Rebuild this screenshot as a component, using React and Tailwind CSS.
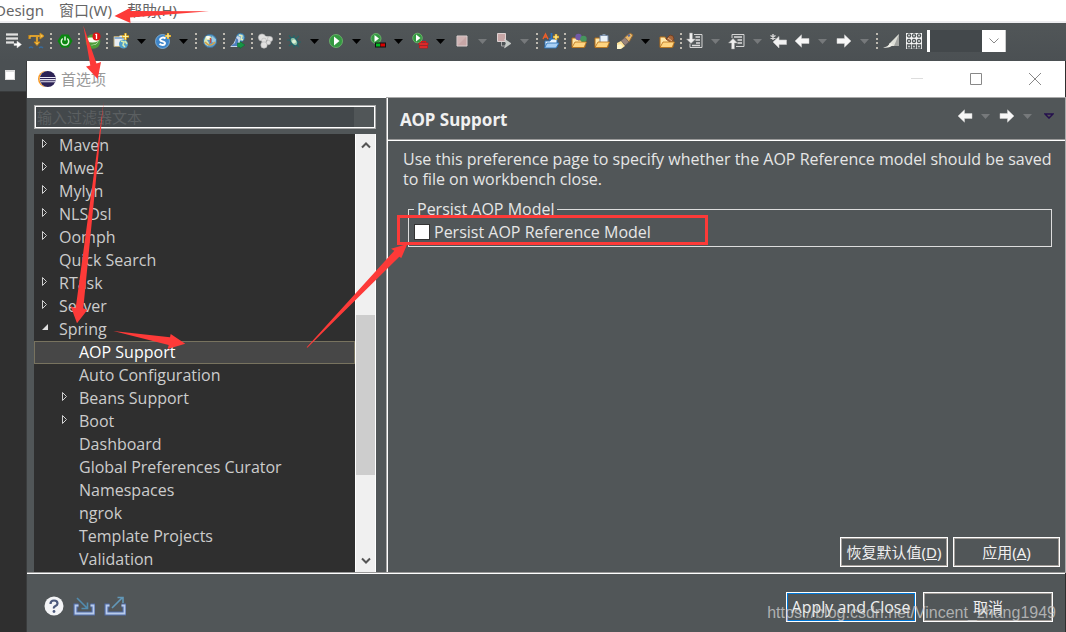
import React from "react";

const paths = {
  skip: (
    <g>
      <path d="M0 1.500h12M0 5.500h12M0 9.500h8" stroke="#9a9c9c" strokeWidth="3" />
      <path d="M0 1.500h12M0 5.500h12M0 9.500h8" stroke="#e0e0e0" strokeWidth="1.400" />
      <path d="M8 10.500h3V8l4.500 3.500-4.500 3.500v-2.500H8z" fill="#fff" stroke="#ccc" strokeWidth=".5" />
    </g>
  ),
  step: (
    <g fill="none">
      <path d="M.5 6V3h12M8 4v7" stroke="#c98918" strokeWidth="2.200" />
      <path d="M1 5.500V3h11M8 4v6" stroke="#f6c251" strokeWidth=".8" />
      <path d="M11 0l4 3-4 3zM5 9h6l-3 3.500z" fill="#f6c251" stroke="#c98918" strokeWidth="1" />
      <path d="M0 15q2-2 4 0M10 15q2-2 4 0" stroke="#376b9c" strokeWidth="1.300" />
    </g>
  ),
  boot: (
    <g>
      <path d="M4.500 1.500h7l4 6.500-4 6.500h-7L.5 8z" fill="#0a8610" />
      <path d="M5.700 5.500a3.700 3.700 0 1 0 4.600 0M8 3.500v4" fill="none" stroke="#e4f5df" strokeWidth="1.500" />
    </g>
  ),
  spring: (
    <g>
      <circle cx="8" cy="8.500" r="7.300" fill="#4d9c38" />
      <path d="M1 6C5 3 9 6 13.500 4c1.500 6-3 9-8 8 4 0 6-1 8-4-4 2-8 2-12 0z" fill="#f5fff0" />
      <circle cx="11.500" cy="3.500" r="4" fill="#df1515" />
      <path d="M11.500 1v5M10.500 2l1-1" stroke="#fff" strokeWidth="1.300" />
    </g>
  ),
  webnew: (
    <g>
      <path d="M1 3.500h5l1-1h5v11H1z" fill="#e8edf2" stroke="#b8a878" />
      <path d="M1.500 5h10" stroke="#8cafd2" strokeWidth="2" />
      <circle cx="10.500" cy="11" r="4.500" fill="#4f9ec9" />
      <path d="M8 8l3 1-1 3 2 2M12 8l2 3" stroke="#d8edaf" strokeWidth="1.500" fill="none" />
      <path d="M12.500 0v7M9 3.500h7" stroke="#d99a12" strokeWidth="2.400" />
      <path d="M12.500 .5v6M9.500 3.500h6" stroke="#fff3a0" strokeWidth="1.200" />
    </g>
  ),
  service: (
    <g>
      <circle cx="7.500" cy="8.500" r="7" fill="#3e85c9" stroke="#92c5ec" strokeWidth=".7" />
      <path d="M10.500 5.500C8 3.500 4.500 5 5.300 7.300c.8 1.500 5 .9 4.700 3.200-.4 2-3.500 2-5.500.3" fill="none" stroke="#fff" strokeWidth="1.900" />
      <path d="M13 0v6M10 3h6" stroke="#d99a12" strokeWidth="2.200" />
      <path d="M13 .5v5M10.500 3h5" stroke="#fff3a0" strokeWidth="1.100" />
    </g>
  ),
  globe: (
    <g>
      <circle cx="8" cy="8" r="6.600" fill="#5b9bc8" stroke="#3f6f95" />
      <path d="M2 8l2-5 4 0 2 2-2 2-3 0 2 3-1 3-3-2z" fill="#dbe8b4" />
      <path d="M10 3l4 3.500-1 4-3-1.500z" fill="#9ccbe0" />
      <path d="M3 9q5 6 10 0" fill="none" stroke="#d3a24c" strokeWidth="1.600" />
      <circle cx="6" cy="4.500" r="1.800" fill="#fff" opacity=".85" />
      <path d="M8.500 5v5" stroke="#c9473d" strokeWidth="1.400" />
    </g>
  ),
  persongo: (
    <g>
      <circle cx="10.500" cy="4.500" r="4.200" fill="#69a9cf" stroke="#2f6692" strokeWidth=".8" />
      <path d="M9 2l3 1-1 3 2 1" fill="none" stroke="#e4edba" strokeWidth="1.500" />
      <path d="M7 3L3.500 10.500 0 14h10V4z" fill="#c9d8ea" />
      <path d="M6 5q3 1 2 4l2 4H1l4-3z" fill="#4f7fbf" />
      <path d="M7.500 10H10V8.500l5 3.500-5 3.500V14H7.500z" fill="#179446" stroke="#0c6b2d" strokeWidth=".5" />
    </g>
  ),
  bubbles: (
    <g fill="#e0e0df" stroke="#b5b5b5" strokeWidth=".6">
      <circle cx="4" cy="4.500" r="3.600" />
      <path d="M5 5l7 .5" stroke="#e0e0df" strokeWidth="4" />
      <circle cx="12" cy="6" r="2.600" />
      <circle cx="6" cy="7.500" r="2.400" />
      <circle cx="6" cy="12" r="3.200" />
      <circle cx="10.500" cy="9.500" r="2.200" />
    </g>
  ),
  bug: (
    <g>
      <path d="M3 2.500l3 3.500M1 7h4M3 13l3-3M8 2v4M13 3l-3 3M15 9h-4M13 14l-3-3M8 15v-4" stroke="#246566" strokeWidth="1.200" />
      <ellipse cx="8" cy="8.500" rx="3" ry="4.500" transform="rotate(-38 8 8.500)" fill="#8cbfa3" stroke="#1d606c" />
      <circle cx="8" cy="8.500" r="2" fill="#dcefd5" />
    </g>
  ),
  run: (
    <g>
      <circle cx="8" cy="8" r="6.500" fill="#349941" stroke="#71ba70" strokeWidth=".8" />
      <path d="M6 3.500l5.500 4.500L6 12.500z" fill="#fff" />
    </g>
  ),
  coverage: (
    <g>
      <circle cx="6" cy="5.500" r="5" fill="#349941" stroke="#71ba70" strokeWidth=".8" />
      <path d="M4.500 2L9 5.500 4.500 9z" fill="#fff" />
      <path d="M5 9.500h11v5H5z" fill="#111" />
      <path d="M6 10.500h4v3H6z" fill="#00bd22" />
      <path d="M10.500 10.500H15v3h-4.500z" fill="#d80000" />
    </g>
  ),
  tools: (
    <g>
      <circle cx="5.500" cy="5" r="4.800" fill="#349941" stroke="#71ba70" strokeWidth=".8" />
      <path d="M4 1.500L8.500 5 4 8.500z" fill="#fff" />
      <path d="M9.500 10V8.500h4V10" fill="none" stroke="#d81818" strokeWidth="1.200" />
      <path d="M7 10h9v2H7zM7.500 13h8v2h-8z" fill="#e63b3b" stroke="#c81212" strokeWidth=".8" />
    </g>
  ),
  stop: (
    <g>
      <path d="M3 3h10v10H3z" fill="#c7a6a6" stroke="#ddd1d1" />
      <path d="M4 4h8L4 12z" fill="#d0b4b4" />
    </g>
  ),
  stoprun: (
    <g>
      <path d="M1.500 .5h8v8h-8z" fill="#c7a6a6" stroke="#ddd1d1" />
      <path d="M8.500 6l6.500 4.500L8.500 15l1.500-4.500z" fill="#c4cac5" stroke="#ddd" strokeWidth=".5" />
      <path d="M5.500 9v4H9" fill="none" stroke="#aaa" />
    </g>
  ),
  java: (
    <g>
      <path d="M2 8h5l1-2h6v8H2z" fill="#eaf5ff" stroke="#2e74b9" />
      <path d="M4 10h12l-3 5H1.500z" fill="#a9d0f5" stroke="#2e74b9" strokeWidth=".9" />
      <path d="M0 6l2.500-5L5 6M1.500 4h2.500" fill="none" stroke="#ef5e28" strokeWidth="1.400" />
      <path d="M8.500 0v5q0 1-2.500 1" fill="none" stroke="#2b72c0" strokeWidth="1.800" />
      <path d="M13 1v6M10 4h6" stroke="#d99a12" strokeWidth="2.400" />
      <path d="M13 1.500v5M10.500 4h5" stroke="#fff3a0" strokeWidth="1.200" />
    </g>
  ),
  folderballs: (
    <g>
      <path d="M1 5h5l1 2h7v7H1z" fill="#ffe7a9" stroke="#b66f17" />
      <circle cx="7.500" cy="4" r="3.200" fill="#7159a7" />
      <circle cx="12.500" cy="6" r="3.200" fill="#46955d" />
      <path d="M4 9h11.500l-2.500 5.500H1z" fill="#ffd581" stroke="#b66f17" strokeWidth=".8" />
    </g>
  ),
  folderclip: (
    <g>
      <path d="M1 5h5l1 2h7v7H1z" fill="#ffe7a9" stroke="#b66f17" />
      <path d="M6 2.500h8v8H6z" fill="#eaf2f9" stroke="#7086a4" />
      <path d="M8.500 1h3v2h-3z" fill="#8397ad" />
      <path d="M4 9h11.500l-2.500 5.500H1z" fill="#ffd581" stroke="#b66f17" strokeWidth=".8" />
    </g>
  ),
  torch: (
    <g>
      <path d="M7 5l6-5 3 2-4 7z" fill="#e8b86b" stroke="#946832" />
      <path d="M4 7.500L8 4.500l4 4.500-4 3.500z" fill="#97837b" stroke="#62554f" strokeWidth=".6" />
      <path d="M0 10l4-2 4 5-4 3H0z" fill="#ffe398" />
      <path d="M0 12l4-1 2 3-3 2H0z" fill="#fff7ce" />
      <path d="M11 3l2-1" stroke="#596ba0" strokeWidth="2" />
    </g>
  ),
  folderpen: (
    <g>
      <path d="M1 4h5l1 2h7v8H1z" fill="#ffe7a9" stroke="#b66f17" />
      <path d="M7 6l4-4 3 1 1 3-3 4z" fill="#a86639" stroke="#6e3a20" strokeWidth=".8" />
      <path d="M9 5l4 3" stroke="#e1b489" />
      <path d="M4 9h11.500l-2.500 5.500H1z" fill="#ffd581" stroke="#b66f17" strokeWidth=".8" />
    </g>
  ),
  docdown: (
    <g>
      <path d="M7 1.500h8v13H3v-4" fill="#555a5c" stroke="#d4d4d4" />
      <path d="M8.500 4H13M8.500 7H13M9 10h4M5 12.500h8" stroke="#ddd" strokeWidth="1.300" />
      <path d="M2.500 0h3v6h3L4 10.500-.5 6h3z" fill="#eee" stroke="#999" strokeWidth=".5" />
    </g>
  ),
  docup: (
    <g>
      <path d="M3 5V1.500h12v12H7" fill="#555a5c" stroke="#d4d4d4" />
      <path d="M5 4h8M8.500 7H13M8.500 10H13" stroke="#ddd" strokeWidth="1.300" />
      <path d="M2.500 16h3v-6h3L4 5.500-.5 10h3z" fill="#eee" stroke="#999" strokeWidth=".5" />
    </g>
  ),
  lastedit: (
    <g>
      <path d="M2 9l6-5.500v3.500h7.500v4.500H8V15z" fill="#f2f2f2" stroke="#c9c9c9" strokeWidth=".6" />
      <path d="M2 1v6M-.5 2.500l5 3M4.500 2.500l-5 3" stroke="#d7d7d7" strokeWidth="1.400" />
    </g>
  ),
  back: <path d="M1 8l6.500-6.200V5.500H15v5H7.500v3.700z" fill="#f7f7f7" stroke="#cfcfcf" strokeWidth=".5" />,
  forward: <path d="M15 8L8.500 1.800V5.500H1v5h7.500v3.700z" fill="#f7f7f7" stroke="#cfcfcf" strokeWidth=".5" />,
  knife: (
    <g>
      <path d="M16 1v12H9l-2-2z" fill="#a3a5a2" />
      <path d="M16 1L6 11l1 2h4z" fill="#dedfd8" />
      <path d="M0 14.500q7 1 10-3L7 10q-2 4-7 4.500z" fill="#efefe8" />
    </g>
  ),
  grid: (
    <g>
      <path d="M0 0h16v16H0z" fill="#f4f4f4" />
      <g fill="#d5d9d9" stroke="#505658" strokeWidth="1.300">
        <circle cx="3" cy="2.500" r="1.600" />
        <circle cx="8" cy="2.500" r="1.600" />
        <circle cx="13" cy="2.500" r="1.600" />
        <circle cx="3" cy="8" r="1.600" />
        <circle cx="8" cy="8" r="1.600" />
        <circle cx="13" cy="8" r="1.600" />
        <path d="M1.500 12h3v3h-3zM6.500 12h3v3h-3zM11.500 12h3v3h-3z" />
      </g>
    </g>
  ),
};

const toolbar = [
  "skip", "step", "|", "boot", "|", "spring", "|", "webnew", "v", "service", "v", "|",
  "globe", "|", "persongo", "|", "bubbles", "|", "bug", "v", "run", "v", "coverage", "v",
  "tools", "v", "stop", "x", "stoprun", "x", "|", "java", "|", "folderballs", "folderclip",
  "torch", "v", "folderpen", "|", "docdown", "x", "docup", "x", "lastedit", "back", "x",
  "forward", "x", "|", "knife", "grid",
];

const tree = [
  ["Maven", 0, "closed"],
  ["Mwe2", 0, "closed"],
  ["Mylyn", 0, "closed"],
  ["NLSDsl", 0, "closed"],
  ["Oomph", 0, "closed"],
  ["Quick Search", 0, ""],
  ["RTask", 0, "closed"],
  ["Server", 0, "closed"],
  ["Spring", 0, "open"],
  ["AOP Support", 1, ""],
  ["Auto Configuration", 1, ""],
  ["Beans Support", 1, "closed"],
  ["Boot", 1, "closed"],
  ["Dashboard", 1, ""],
  ["Global Preferences Curator", 1, ""],
  ["Namespaces", 1, ""],
  ["ngrok", 1, ""],
  ["Template Projects", 1, ""],
  ["Validation", 1, ""],
];

function Icon({ name }) {
  return (
    <svg className="size-4 shrink-0 overflow-visible" viewBox="0 0 16 16" aria-hidden="true">
      {paths[name]}
    </svg>
  );
}

function Caret({ disabled }) {
  return (
    <button aria-label="More" className="flex w-[19px] shrink-0 justify-center">
      <svg className="h-[5px] w-[9px]" viewBox="0 0 9 5" aria-hidden="true">
        <path d="M0 0h9L4.500 5z" fill={disabled ? "#76797b" : "#000"} />
      </svg>
    </button>
  );
}

function Tool({ name }) {
  if (name === "|") {
    return (
      <span className="flex w-[5px] shrink-0 justify-center">
        <svg className="h-4 w-0.5" viewBox="0 0 2 16" aria-hidden="true">
          <path d="M0 0h2v2H0zM0 5h2v2H0zM0 9h2v2H0zM0 14h2v2H0z" fill="#bdb9b0" />
        </svg>
      </span>
    );
  }
  if (name === "v" || name === "x") return <Caret disabled={name === "x"} />;
  return (
    <button aria-label={name} className="flex w-[23px] shrink-0 justify-center">
      <Icon name={name} />
    </button>
  );
}

function Twisty({ state }) {
  return (
    <svg className="mb-0.5 h-3 w-2.5 shrink-0" viewBox="0 0 10 12" aria-hidden="true">
      {state === "closed" && <path d="M1.500 1.500v8l4-4z" fill="none" stroke="#d0d0d0" />}
      {state === "open" && <path d="M7 2v6H1z" fill="#e0e0e0" />}
    </svg>
  );
}

function Chevron({ up }) {
  return (
    <button aria-label={up ? "Scroll up" : "Scroll down"} className="flex h-[22px] items-center justify-center">
      <svg className="h-2 w-2.5" viewBox="0 0 10 8" aria-hidden="true">
        <path d={up ? "M1 6.500l4-4 4 4" : "M1 1.500l4 4 4-4"} fill="none" stroke="#555" strokeWidth="2" />
      </svg>
    </button>
  );
}

const button =
  "h-[30px] border border-white whitespace-nowrap text-[#f0f0f0] outline -outline-offset-2 bg-[#515658]";

export default function App() {
  return (
    <div className="relative flex min-h-screen flex-col overflow-hidden bg-[#2f2f2f] font-['Noto_Sans','Noto_Sans_CJK_SC',sans-serif] text-[15px] leading-5 text-[#e6e6e6]">
      <nav className="flex h-[23px] items-start gap-[15px] border-b-2 border-[#ededf0] bg-white text-[#666]">
        <button className="-ml-[5px]">Design</button>
        <button>窗口(W)</button>
        <button>帮助(H)</button>
      </nav>

      <div className="flex h-[38px] items-center bg-linear-to-b from-[#515658] to-[#4b5053] pb-0.5 pl-0.5">
        {toolbar.map((name, i) => (
          <Tool key={i} name={name} />
        ))}
        <select
          aria-label="Quick access"
          className="ml-0.5 h-[22px] w-[55px] shrink-0 appearance-none border-l-3 border-white bg-[#43484b]"
        />
        <span className="flex h-[22px] w-6 items-center justify-center border-r border-[#ccc] bg-white">
          <svg className="h-1.5 w-2.5" viewBox="0 0 10 6" aria-hidden="true">
            <path d="M.5 .5l4.500 4.500 4.500-4.500" fill="none" stroke="#888" />
          </svg>
        </span>
      </div>

      <div className="flex flex-1">
        <aside className="w-[27px] shrink-0 border-r border-[#3a3c3d]">
          <div className="flex h-[31px] items-start border-b border-[#393b3c] bg-[#4b5053] pt-[9px] pl-[5px]">
            <button aria-label="Restore" className="h-2.5 w-2.5 border border-t-2 border-[#ddd] bg-white" />
          </div>
        </aside>

        <section className="mr-px flex min-w-0 flex-1 flex-col bg-[#515658]">
          <header className="flex h-[37px] items-center bg-white pr-[23px] pb-0.5 pl-[11px] text-[#999]">
            <svg className="size-[18px]" viewBox="0 0 18 18" aria-hidden="true">
              <circle cx="8" cy="9" r="8" fill="#f79722" />
              <circle cx="9.500" cy="9" r="8" fill="#fff" />
              <circle cx="9.800" cy="9" r="8" fill="#2c2255" />
              <path d="M2 7h15.700v1H2zM2 9h15.700v1.200H2zM2.500 11.300h15v1h-15z" fill="#e8e6f3" />
            </svg>
            <h1 className="ml-[5px]">首选项</h1>
            <div className="ml-auto flex gap-[45px]">
              <button aria-label="Minimize">
                <svg className="size-3.5" viewBox="0 0 14 14" aria-hidden="true">
                  <path d="M1 6.500h12" stroke="#ddd" />
                </svg>
              </button>
              <button aria-label="Maximize">
                <svg className="size-3.5" viewBox="0 0 14 14" aria-hidden="true">
                  <path d="M1.500 1.500h11v11h-11z" fill="none" stroke="#888" />
                </svg>
              </button>
              <button aria-label="Close">
                <svg className="size-3.5" viewBox="0 0 14 14" aria-hidden="true">
                  <path d="M1 1l12 12M13 1L1 13" stroke="#888" />
                </svg>
              </button>
            </div>
          </header>

          <div className="flex flex-1">
            <div className="flex w-[360px] shrink-0 flex-col pt-[7px] pr-[11px] pl-[7px]">
              <div className="flex h-6 border border-[#aaa] outline outline-white -outline-offset-2">
                <input
                  aria-label="输入过滤器文本"
                  placeholder="输入过滤器文本"
                  className="m-px min-w-0 flex-1 bg-[#43484b] px-px placeholder:text-[#5b5f61]"
                />
                <span className="w-5" />
              </div>
              <div className="mt-[5px] flex flex-1">
                <ul role="tree" className="min-w-0 flex-1 bg-[#2f2f2f] font-['Open_Sans',sans-serif] text-base leading-5 text-[#ccc]">
                  {tree.map(([label, level, state]) => (
                    <li
                      key={label}
                      role="treeitem"
                      aria-selected={label === "AOP Support"}
                      className={[
                        "flex h-[23px] items-center gap-2 border pb-px",
                        level ? "pl-[26px]" : "pl-1.5",
                        label === "AOP Support" ? "border-[#78735f] bg-[#474747] text-white" : "border-transparent",
                      ].join(" ")}
                    >
                      <Twisty state={state} />
                      {label}
                    </li>
                  ))}
                </ul>
                <div className="flex w-[21px] flex-col border-x border-white bg-[#f0f0f0]">
                  <Chevron up />
                  <div className="flex-[159]" />
                  <div className="flex-[160] bg-[#cdcdcd]" />
                  <div className="flex-[75]" />
                  <Chevron />
                </div>
              </div>
            </div>

            <div className="flex min-w-0 flex-1 flex-col border-l border-white outline outline-[#aaa]">
              <div className="flex h-[43px] items-center justify-between border-b border-white pr-1 pl-3 shadow-[inset_0_-1px_0_#999]">
                <h2 className="pt-0.5 text-[17px] font-bold text-[#f0f0f0]">AOP Support</h2>
                <div className="mb-1.5 flex items-center">
                  <Tool name="back" />
                  <Tool name="x" />
                  <Tool name="forward" />
                  <Tool name="x" />
                  <button aria-label="View menu" className="flex w-6 justify-center">
                    <svg className="h-1.5 w-2.5" viewBox="0 0 10 6" aria-hidden="true">
                      <path d="M1 1h8L5 5z" fill="#555" stroke="#25104d" strokeWidth="1.500" />
                    </svg>
                  </button>
                </div>
              </div>
              <p className="pt-2 pr-3 pl-[15px] font-['Open_Sans',sans-serif] text-base leading-5">
                Use this preference page to specify whether the AOP Reference model should be saved to file on workbench close.
              </p>
              <fieldset className="mt-2.5 mr-[13px] ml-5 border border-[#ddd] px-[5px] pb-[3px] font-['Open_Sans',sans-serif] text-base leading-5">
                <legend className="px-[3px]">Persist AOP Model</legend>
                <label className="flex h-6 items-center gap-1 pt-px">
                  <input type="checkbox" className="size-4 appearance-none border border-[#333] bg-white" />
                  Persist AOP Reference Model
                </label>
              </fieldset>
              <div className="mt-auto flex justify-end gap-[5px] pr-[5px] pb-[5px]">
                <button className={`${button} w-[108px] text-[15px] outline-[#a29d99]`}>
                  恢复默认值(<u>D</u>)
                </button>
                <button className={`${button} w-[107px] text-[15px] outline-[#a29d99]`}>
                  应用(<u>A</u>)
                </button>
              </div>
            </div>
          </div>

          <footer className="relative flex h-[60px] items-center border-t border-[#999] pr-3 pl-[17px] shadow-[inset_0_1px_0_white]">
            <div className="flex items-center gap-[9px] pt-1.5">
              <button aria-label="Help">
                <svg className="size-5" viewBox="0 0 20 20" aria-hidden="true">
                  <circle cx="10" cy="10" r="9.500" fill="#f3f4f6" />
                  <path d="M6.500 8q0-3.500 3.500-3.500T13.500 7.500Q13.500 9 11.500 10T10 12.500" fill="none" stroke="#4c597c" strokeWidth="2.200" />
                  <circle cx="10" cy="15.500" r="1.400" fill="#4c597c" />
                </svg>
              </button>
              <button aria-label="Import">
                <svg className="size-[22px]" viewBox="0 0 22 22" aria-hidden="true">
                  <path d="M5.500 10.500H2.500v8h18v-8h-3" fill="none" stroke="#506caa" strokeWidth="4" />
                  <path d="M5.500 10.500H2.500v8h18v-8h-3" fill="none" stroke="#b8cbea" strokeWidth="1.800" />
                  <path d="M4 3l10 10M14.500 7.500v6h-6" fill="none" stroke="#528cae" strokeWidth="1.600" />
                </svg>
              </button>
              <button aria-label="Export">
                <svg className="size-[22px]" viewBox="0 0 22 22" aria-hidden="true">
                  <path d="M5.500 10.500H2.500v8h18v-8h-3" fill="none" stroke="#506caa" strokeWidth="4" />
                  <path d="M5.500 10.500H2.500v8h18v-8h-3" fill="none" stroke="#b8cbea" strokeWidth="1.800" />
                  <path d="M8 13L18 3M13.500 2.500h5.500v5.500" fill="none" stroke="#6298b8" strokeWidth="1.600" />
                </svg>
              </button>
            </div>
            <div className="ml-auto flex gap-[7px] pt-2">
              <button className={`${button} w-[130px] font-['Open_Sans',sans-serif] text-base outline-[#0078d7]`}>
                Apply and Close
              </button>
              <button className={`${button} w-[130px] text-[15px] outline-[#a29d99]`}>取消</button>
            </div>
            <span className="pointer-events-none absolute right-[9px] bottom-[7px] font-['Liberation_Sans',sans-serif] text-base leading-6 text-[#d0d0d0]/75">
              https://blog.csdn.net/Vincent_zhang1949
            </span>
          </footer>
        </section>
      </div>

      <svg
        className="pointer-events-none absolute top-0 left-0 h-[632px] w-[1066px]"
        viewBox="0 0 1066 632"
        fill="#fd3a38"
        aria-hidden="true"
      >
        <path d="M114.500 16L131 7.500l-1 3.500 79 .3-79 6.200.5 5.500z" />
        <path d="M83.300 25.500L90.300 65.500 86 66.500 97.700 79 101 62l-4.500 1.500z" />
        <path d="M103.700 101.500L75.700 308l-5-1.700L77 323.300 87.300 310l-4-1.700z" />
        <path d="M113.300 331l56.700 6.300.7-3.300 14.600 9.700-17.600 5.300 1-4z" />
        <path d="M306.700 347.300l87.600-96.600-3.300-2L407.300 244 401.300 258l-2-1.300-92 91z" />
        <path d="M398.500 216.500h308v27h-308z" fill="none" stroke="#fd3a38" strokeWidth="3" />
      </svg>
    </div>
  );
}
